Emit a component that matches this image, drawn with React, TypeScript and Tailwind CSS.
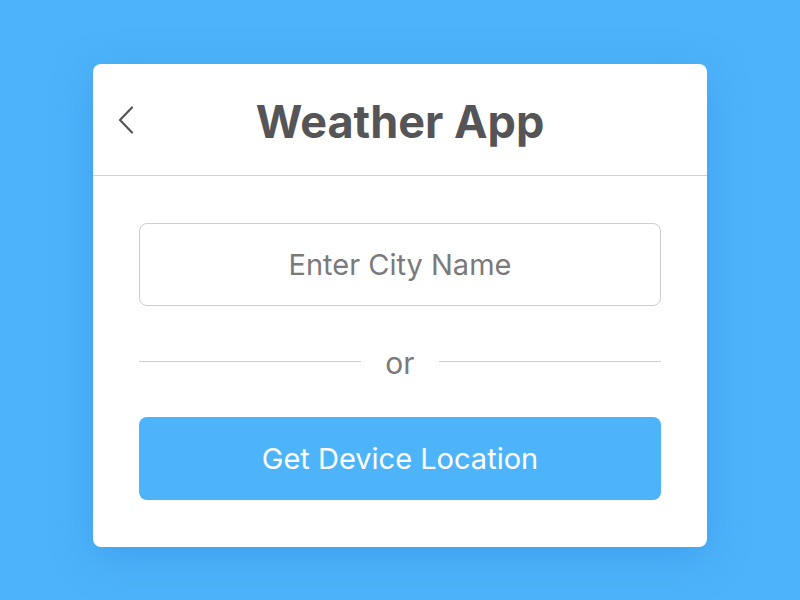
import React from "react";

export default function App() {
  return (
    <div
      className="w-[800px] h-[600px] bg-[#4db4f9] flex items-start justify-center pt-[64px]"
      style={{ fontFamily: "Inter, 'Noto Sans', sans-serif" }}
    >
      <div className="w-[614px] h-[483px] bg-white rounded-[8px] shadow-[0_10px_40px_rgba(40,120,220,0.35)] flex flex-col">
        <div className="relative h-[112px] flex items-center justify-center border-b border-[#cfcfcf]">
          <button className="absolute left-[24px] top-[42px] w-[18px] h-[28px] flex items-center justify-center">
            <svg width="18" height="28" viewBox="0 0 18 28" fill="none">
              <path d="M15 1.5 L3 14 L15 26.5" stroke="#555" strokeWidth="2.2" strokeLinecap="round" strokeLinejoin="round" />
            </svg>
          </button>
          <h1 className="text-[45px] font-bold text-[#555557] leading-none mt-[4px]">Weather App</h1>
        </div>
        <div className="flex flex-col px-[46px] pt-[47px]">
          <div className="h-[83px] border border-[#cdcdcd] rounded-[8px] flex items-center justify-center">
            <span className="text-[29px] text-[#7a7a7c] leading-none">Enter City Name</span>
          </div>
          <div className="h-[111px] flex items-center gap-[24px]">
            <div className="flex-1 h-px bg-[#cccccc]" />
            <span className="text-[30px] text-[#7a7a7c] leading-none mt-[2px]">or</span>
            <div className="flex-1 h-px bg-[#cccccc]" />
          </div>
          <div className="h-[83px] bg-[#4db4f9] rounded-[8px] flex items-center justify-center">
            <span className="text-[29px] text-white leading-none">Get Device Location</span>
          </div>
        </div>
      </div>
    </div>
  );
}
